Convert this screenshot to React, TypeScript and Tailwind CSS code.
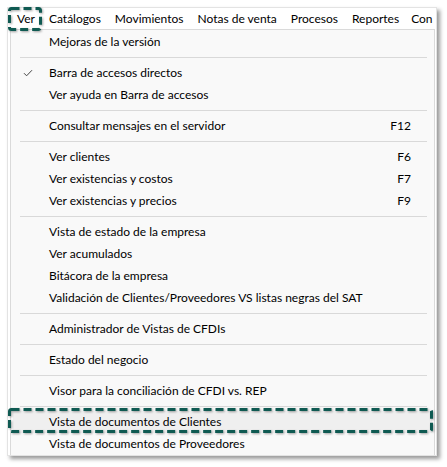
import React from "react";

type Entry =
  | { kind: "item"; label: string; key?: string; checked?: boolean; hover?: boolean }
  | { kind: "sep" };

const MENU: string[] = ["Ver", "Catálogos", "Movimientos", "Notas de venta", "Procesos", "Reportes"];

const ENTRIES: Entry[] = [
  { kind: "item", label: "Mejoras de la versión" },
  { kind: "sep" },
  { kind: "item", label: "Barra de accesos directos", checked: true },
  { kind: "item", label: "Ver ayuda en Barra de accesos" },
  { kind: "sep" },
  { kind: "item", label: "Consultar mensajes en el servidor", key: "F12" },
  { kind: "sep" },
  { kind: "item", label: "Ver clientes", key: "F6" },
  { kind: "item", label: "Ver existencias y costos", key: "F7" },
  { kind: "item", label: "Ver existencias y precios", key: "F9" },
  { kind: "sep" },
  { kind: "item", label: "Vista de estado de la empresa" },
  { kind: "item", label: "Ver acumulados" },
  { kind: "item", label: "Bitácora de la empresa" },
  { kind: "item", label: "Validación de Clientes/Proveedores VS listas negras del SAT" },
  { kind: "sep" },
  { kind: "item", label: "Administrador de Vistas de CFDIs" },
  { kind: "sep" },
  { kind: "item", label: "Estado del negocio" },
  { kind: "sep" },
  { kind: "item", label: "Visor para la conciliación de CFDI vs. REP" },
  { kind: "sep" },
  { kind: "item", label: "Vista de documentos de Clientes", hover: true },
  { kind: "item", label: "Vista de documentos de Proveedores" },
];

function Check() {
  return (
    <svg width="10" height="8" viewBox="0 0 10 8" className="text-[#444]">
      <path d="M1 4.2 L3.6 6.8 L9 1.2" fill="none" stroke="currentColor" strokeWidth="1" />
    </svg>
  );
}

// dashed annotation frame drawn over the screenshot
function DashedBox() {
  return (
    <svg className="absolute inset-0 overflow-visible" width="100%" height="100%">
      <rect
        x="1.5"
        y="1.5"
        width="calc(100% - 3px)"
        height="calc(100% - 3px)"
        rx="2"
        fill="none"
        stroke="#0f5a52"
        strokeWidth="3"
        strokeDasharray="8 4"
        style={{ filter: "drop-shadow(1px 1px 1px rgba(0,0,0,0.35))" }}
      />
    </svg>
  );
}

export default function App() {
  return (
    <div className="relative w-[447px] h-[467px] bg-white text-[12px] text-black" style={{ fontFamily: "Lato, 'Noto Sans', sans-serif" }}>
      <div className="absolute left-[7px] top-[7px] w-[430px] h-[449px] bg-white border border-[#e3e3e3] shadow-[3px_3px_4px_rgba(0,0,0,0.4)] overflow-hidden">
        <div className="flex h-[21px] items-center whitespace-nowrap">
          {MENU.map((m, i) => (
            <span key={m} className={i === 0 ? "pl-[9px] pr-[7px]" : "px-[7px]"}>
              {m}
            </span>
          ))}
          <span className="pl-[5px] w-[29px] overflow-hidden">Con</span>
        </div>
        <div className="ml-[2px] mr-[1px] h-full bg-[#f9f9f9] border-t border-l border-r border-[#dadada] pt-[1px]">
          {ENTRIES.map((e, i) =>
            e.kind === "sep" ? (
              <div key={i} className="h-[9px] flex items-center pl-[9px] pr-[7px]">
                <div className="h-px w-full bg-[#d9d9d9]" />
              </div>
            ) : (
              <div
                key={i}
                className={`h-[22px] flex items-center mx-[2px] ${e.hover ? "bg-[#efefef]" : ""}`}
              >
                <div className="w-[36px] flex pl-[10px]">{e.checked && <Check />}</div>
                <div className="flex-1 whitespace-nowrap">{e.label}</div>
                <div className="w-[60px] pr-[21px] text-right">{e.key}</div>
              </div>
            )
          )}
        </div>
      </div>
      <div className="absolute left-[8px] top-[7px] w-[34px] h-[24px]">
        <DashedBox />
      </div>
      <div className="absolute left-[8px] top-[408px] w-[425px] h-[25px]">
        <DashedBox />
      </div>
    </div>
  );
}
